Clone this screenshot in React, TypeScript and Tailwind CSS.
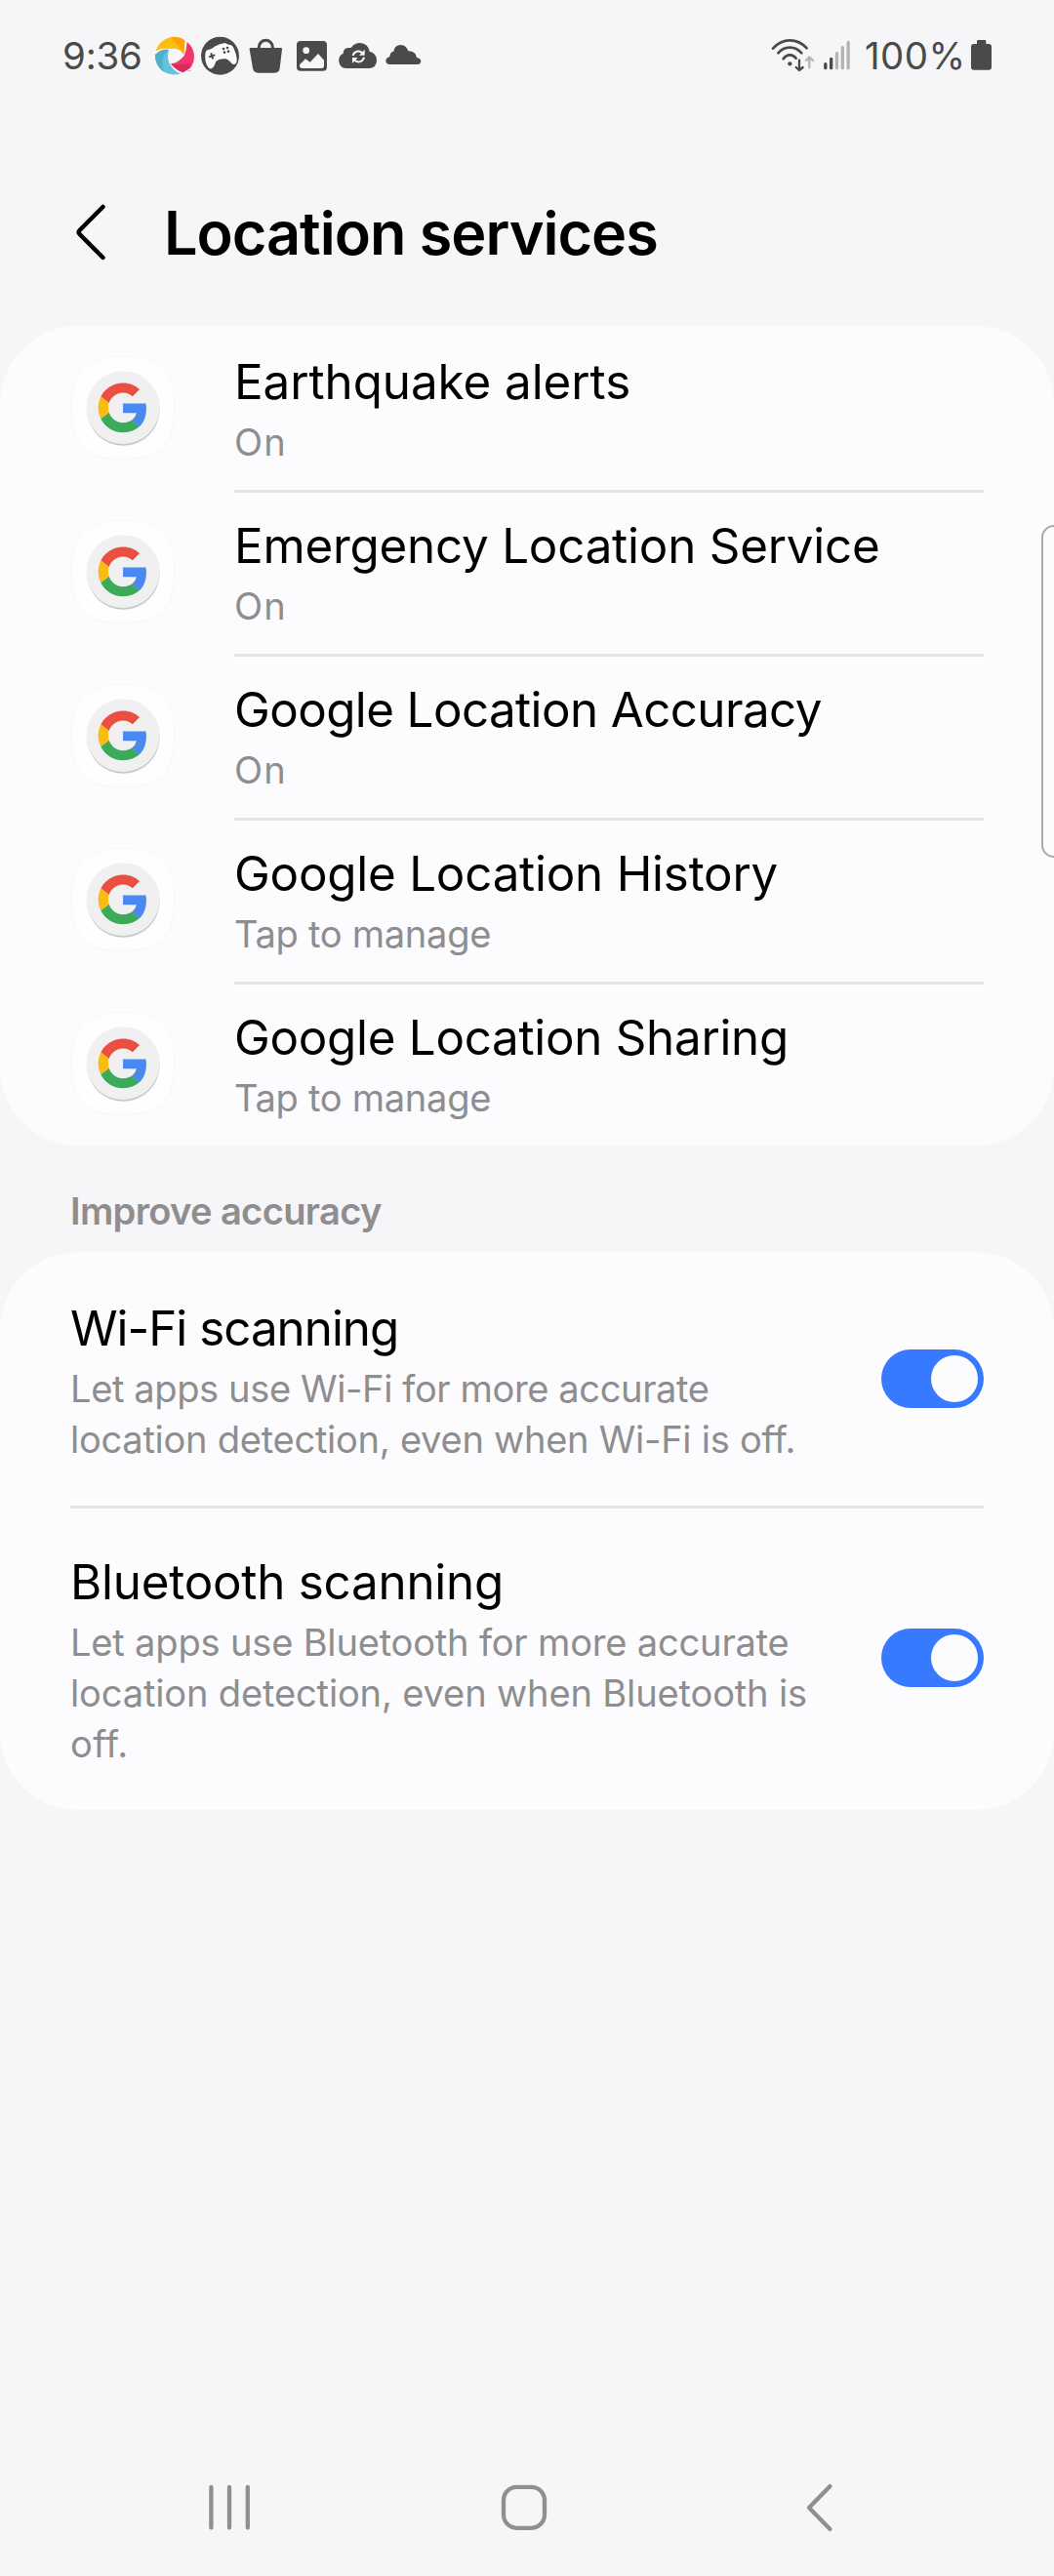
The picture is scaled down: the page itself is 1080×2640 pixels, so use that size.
import React from "react";

const DARK = "#4a4a4a";
const BG = "#f6f6f8";

function PinwheelIcon() {
  return (
    <svg viewBox="315 39 141 144" width="47" height="48">
      <path d="M329 97 A58 58 0 0 1 418 64 L415 108 Q404 84 372 89 Q345 86 329 97Z" fill="#fdbb12" />
      <path d="M374 54.500 A58 58 0 0 1 418 64 L415 108 Q409 92 396 86 Q392 66 374 54.500Z" fill="#ffa304" />
      <path d="M329 96 Q345 72 376 72 Q402 76 415 108 Q404 84 372 89 Q345 86 329 97Z" fill="#fcc013" />
      <path d="M327 108 Q345 90 369 93 Q362 118 372 138 Q385 160 405 166 A58 58 0 0 1 327 108Z" fill="#64c3dc" />
      <path d="M327 108 Q345 90 369 93 Q352 104 349 128 Q348 146 356 162 A58 58 0 0 1 327 108Z" fill="#4fafc6" />
      <path d="M425 69 A58 58 0 0 1 436 148 L412 163 Q390 155 375 136 Q400 132 417 110 Q424 90 425 69Z" fill="#f4366f" />
      <path d="M434 150 L412 163 Q390 155 375 136 Q404 142 434 134Z" fill="#d72c5c" />
      <path d="M427 158 H437" stroke="#f08fae" strokeWidth="3" />
    </svg>
  );
}

function GamepadIcon() {
  return (
    <svg viewBox="456 39 141 144" width="47" height="48">
      <circle cx="526.500" cy="112" r="58.500" fill={DARK} />
      <path
        d="M484 95 Q500 93 512 82 Q525 74 542 72 Q550 78 558 78 Q566 80 570 92 Q579 112 578 128 Q574 142 563 136 Q555 125 545 121 Q527 119 514 128 Q509 146 500 151 Q489 153 484 136 Q477 113 484 95Z"
        fill="#fbfbfd"
      />
      <path d="M492 115 L511 109 M498.500 103 L504.500 121" stroke={DARK} strokeWidth="6" />
      <g fill={DARK}>
        <circle cx="537" cy="90" r="4" />
        <circle cx="549" cy="87" r="4" />
        <circle cx="540" cy="101" r="4" />
        <circle cx="552" cy="98" r="4" />
      </g>
    </svg>
  );
}

function BagIcon() {
  return (
    <svg viewBox="597 39 141 144" width="47" height="48">
      <path d="M621 87 H713 Q717 87 717 91 L710 150 Q708 164 695 164 H643 Q630 164 627 150 L617 91 Q617 87 621 87Z" fill={DARK} />
      <path d="M646 90 V85 A21 21 0 0 1 688 85 V90" fill="none" stroke={DARK} strokeWidth="9" />
    </svg>
  );
}

function PictureIcon() {
  return (
    <svg viewBox="738 39 141 144" width="47" height="48">
      <rect x="762" y="66" width="93" height="92.500" rx="12" fill={DARK} />
      <circle cx="791" cy="95" r="10" fill={BG} />
      <path d="M771 139 L789 121 L803 131 L828 105 L846 125 V142 Q846 150 838 150 H779 Q771 150 771 142Z" fill={BG} />
    </svg>
  );
}

function CloudSyncIcon() {
  return (
    <svg viewBox="879 39 141 144" width="47" height="48">
      <path
        d="M913 150 A22 24 0 0 1 905 104 Q906 88 920 87 Q927 87 930 86 Q939 72 957 72 Q982 74 986 98 Q1008 104 1008 126 Q1007 148 986 150Z"
        fill={DARK}
      />
      <g fill="none" stroke={BG} strokeWidth="6">
        <path d="M935 111 A17 17 0 0 1 964 103" />
        <path d="M969 116 A17 17 0 0 1 940 125" />
      </g>
      <path d="M971 92 V110 H954Z M933 135 V117 H950Z" fill={BG} />
    </svg>
  );
}

function CloudIcon() {
  return (
    <svg viewBox="1020 39 141 144" width="47" height="48">
      <path d="M1046 138 Q1036 137 1036 127 Q1037 117 1048 115 Q1048 100 1060 98 Q1063 79 1082 78 Q1099 79 1105 97 Q1127 96 1131 117 Q1143 119 1144 128 Q1143 137 1134 138Z" fill={DARK} />
    </svg>
  );
}

function WifiSignalIcon() {
  return (
    <svg viewBox="60 39 252 144" width="84" height="48" fill="none" strokeLinecap="round" strokeLinejoin="round">
      <g stroke={DARK} strokeWidth="8">
        <path d="M66 89 Q88 64 118 64 Q148 64 170 88" />
        <path d="M82 103 Q97 86 118 86 Q139 86 154 103" />
        <path d="M98 121 Q106 109 118 109 Q130 109 137 119" />
      </g>
      <circle cx="118" cy="136" r="6.500" fill={DARK} />
      <path d="M147 125 V155 M137 147 L147 156 L158 147" stroke={DARK} strokeWidth="7" />
      <path d="M178 148 V117 M168 126 L178 116 L189 126" stroke="#b4b4b6" strokeWidth="7" />
      <g strokeWidth="10">
        <path d="M227.500 137 V149" stroke={DARK} />
        <path d="M245 121 V149" stroke={DARK} />
        <path d="M262.500 104 V149 M280 86 V149 M297.500 70 V149" stroke="#b4b4b6" />
      </g>
    </svg>
  );
}

function BatteryIcon() {
  return (
    <svg viewBox="675 39 63 144" width="21" height="48">
      <path d="M696 63 H718 Q721 63 721 67 V75 H729 Q738 75 738 84 V146 Q738 155 729 155 H684 Q675 155 675 146 V84 Q675 75 684 75 H693 V67 Q693 63 696 63Z" fill={DARK} />
    </svg>
  );
}

function StatusBar() {
  return (
    <header className="flex h-[114px] items-start justify-between pt-[33px] pr-[64px] pl-[64px] text-[38.4px] leading-[48px] text-[#4a4a4a]">
      <div className="flex">
        <span className="w-[91px] tracking-[-0.17px]">9:36</span>
        <PinwheelIcon />
        <GamepadIcon />
        <BagIcon />
        <PictureIcon />
        <CloudSyncIcon />
        <CloudIcon />
      </div>
      <div className="flex">
        <WifiSignalIcon />
        <span className="ml-[12px] w-[109px] tracking-[0.5px]">100%</span>
        <BatteryIcon />
      </div>
    </header>
  );
}

function GoogleIcon() {
  return (
    <svg viewBox="0 0 108 108" width="108" height="108" className="shrink-0">
      <path
        d="M54 1.500 C92 1.500 106.500 16 106.500 54 C106.500 92 92 106.500 54 106.500 C16 106.500 1.500 92 1.500 54 C1.500 16 16 1.500 54 1.500Z"
        fill="#fefefe"
        stroke="#f7f7f8"
      />
      <circle cx="54.500" cy="56" r="37" fill="#bdbdbf" opacity="0.5" />
      <circle cx="54.200" cy="55" r="37.300" fill="#c4c4c6" />
      <circle cx="54" cy="53.700" r="37.500" fill="#f0f0f1" />
      <g transform="translate(28.600 28.400) scale(1.06)">
        <path fill="#ea4f41" d="M24 9.500c3.540 0 6.710 1.220 9.210 3.600l6.850-6.850C35.900 2.380 30.470 0 24 0 14.620 0 6.510 5.380 2.560 13.220l7.980 6.190C12.430 13.720 17.740 9.500 24 9.500z" />
        <path fill="#4a88f2" d="M46.500 24.550c0-1.570-.15-3.090-.38-4.550H24v9.020h12.940c-.58 2.960-2.260 5.480-4.780 7.180l7.730 6c4.510-4.180 6.610-10.360 6.610-17.650z" />
        <path fill="#f9bc15" d="M10.530 28.590c-.48-1.450-.76-2.990-.76-4.590s.27-3.140.76-4.590l-7.980-6.190C.92 16.460 0 20.120 0 24c0 3.880.92 7.540 2.560 10.780l7.970-6.190z" />
        <path fill="#3caa58" d="M24 48c6.480 0 11.930-2.130 15.890-5.810l-7.730-6c-2.150 1.450-4.920 2.300-8.160 2.300-6.260 0-11.570-4.220-13.470-9.910l-7.980 6.190C6.510 42.620 14.620 48 24 48z" />
      </g>
    </svg>
  );
}

const services = [
  { name: "Earthquake alerts", spacing: "tracking-[-0.04px]", status: "On", statusSpacing: "tracking-[1.2px]" },
  { name: "Emergency Location Service", spacing: "tracking-[-0.2px]", status: "On", statusSpacing: "tracking-[1.2px]" },
  { name: "Google Location Accuracy", spacing: "tracking-[-0.58px]", status: "On", statusSpacing: "tracking-[1.2px]" },
  { name: "Google Location History", spacing: "tracking-[-0.21px]", status: "Tap to manage", statusSpacing: "tracking-[-0.3px]" },
  { name: "Google Location Sharing", spacing: "tracking-[-0.27px]", status: "Tap to manage", statusSpacing: "tracking-[-0.3px]" },
];

const scanners = [
  {
    name: "Wi-Fi scanning",
    spacing: "tracking-[-0.98px]",
    lines: [
      { text: "Let apps use Wi-Fi for more accurate", spacing: "tracking-[-0.4px]" },
      { text: "location detection, even when Wi-Fi is off.", spacing: "tracking-[-0.28px]" },
    ],
  },
  {
    name: "Bluetooth scanning",
    spacing: "tracking-[-0.22px]",
    lines: [
      { text: "Let apps use Bluetooth for more accurate", spacing: "tracking-[-0.2px]" },
      { text: "location detection, even when Bluetooth is", spacing: "tracking-[-0.16px]" },
      { text: "off.", spacing: "tracking-[0.3px]" },
    ],
  },
];

function Toggle() {
  return (
    <button role="switch" aria-checked="true" className="mb-[6px] flex h-[60px] w-[105px] shrink-0 items-center justify-end rounded-full bg-[#387aff] pr-[6px]">
      <span className="size-[48px] rounded-full bg-[#fcfcff]" />
    </button>
  );
}

export default function App() {
  return (
    <div className="relative flex h-[2640px] w-[1080px] flex-col overflow-hidden bg-[#f6f6f8] font-['Inter','Roboto',sans-serif] text-black">
      <StatusBar />

      <div className="flex h-[220px] items-start pt-[89px] pl-[72px]">
        <svg viewBox="0 0 96 72" width="96" height="72" fill="none" stroke="#000" strokeWidth="4.500" strokeLinecap="round" strokeLinejoin="round">
          <path d="M33.500 9 L9.600 33 Q7.600 35 9.600 37 L33.500 61" />
        </svg>
        <h1 className="text-[61.2px] leading-[72px] font-semibold tracking-[-1.03px] whitespace-nowrap">Location services</h1>
      </div>

      <section className="rounded-[80px] bg-[#fcfcfe]">
        {services.map((s, i) => (
          <div key={s.name} className="flex h-[168px] items-center gap-[60px] pr-[72px] pl-[72px]">
            <GoogleIcon />
            <div className={i === 0 ? "h-full flex-1 pt-[27px]" : "h-full flex-1 border-t-[3px] border-[#e4e4e6] pt-[24px]"}>
              <p className={`text-[49.3px] leading-[60px] whitespace-nowrap ${s.spacing}`}>{s.name}</p>
              <p className={`mt-[6px] text-[38.1px] leading-[52px] whitespace-nowrap text-[#8e8e90] ${s.statusSpacing}`}>{s.status}</p>
            </div>
          </div>
        ))}
      </section>

      <h2 className="h-[109px] pt-[41px] pl-[72px] text-[38.1px] leading-[52px] font-semibold tracking-[-0.65px] text-[#8e8e90]">Improve accuracy</h2>

      <section className="rounded-[80px] bg-[#fcfcfe] px-[72px]">
        {scanners.map((s, i) => (
          <div
            key={s.name}
            className={i === 0 ? "flex items-center justify-between pt-[48px] pb-[42px]" : "flex items-center justify-between border-t-[3px] border-[#e4e4e6] pt-[45px] pb-[42px]"}
          >
            <div>
              <p className={`text-[49.3px] leading-[60px] whitespace-nowrap ${s.spacing}`}>{s.name}</p>
              <div className="mt-[6px] text-[38.1px] leading-[52px] text-[#8e8e90]">
                {s.lines.map((l) => (
                  <p key={l.text} className={`whitespace-nowrap ${l.spacing}`}>{l.text}</p>
                ))}
              </div>
            </div>
            <Toggle />
          </div>
        ))}
      </section>

      <nav className="mt-auto flex h-[96px] items-start pl-[214px]">
        <svg viewBox="0 0 42 50" width="42" height="50" stroke="#8f8f91" strokeWidth="4.300" strokeLinecap="round">
          <path d="M2.400 5 V46.500 M21 5 V46.500 M39.800 5 V46.500" />
        </svg>
        <svg viewBox="0 0 50 50" width="50" height="50" className="ml-[256px]" fill="none" stroke="#8f8f91" strokeWidth="4.300">
          <rect x="4" y="4.800" width="42" height="42" rx="13.500" />
        </svg>
        <svg viewBox="0 0 32 52" width="32" height="52" className="ml-[261px]" fill="none" stroke="#8f8f91" strokeWidth="4.300" strokeLinecap="round" strokeLinejoin="round">
          <path d="M27.500 4 L6 26 L27.500 48" />
        </svg>
      </nav>

      <div className="absolute top-[538px] right-[-20px] h-[341px] w-[33px] rounded-[13px] border-2 border-[#aaaaac] bg-[#fcfcfe]" />
    </div>
  );
}
